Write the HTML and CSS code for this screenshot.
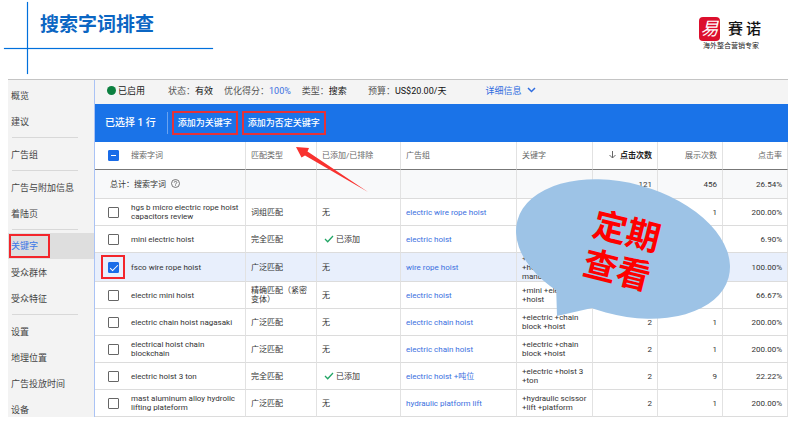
FILE: index.html
```html
<!DOCTYPE html>
<html lang="zh-CN">
<head>
<meta charset="utf-8">
<meta name="viewport" content="width=device-width, initial-scale=1">
<title>搜索字词排查</title>
<link rel="stylesheet" href="styles.css">
</head>
<body>
<header class="slide-head">
  <h1 class="title">搜索字词排查</h1>
  <div class="brand">
    <div class="brand-row">
      <span class="seal">易</span>
      <span class="brand-name"><span>賽</span><span>诺</span></span>
    </div>
    <div class="slogan">海外整合营销专家</div>
  </div>
</header>

<div class="panel">
  <nav class="side">
    <a href="#">概览</a>
    <a href="#">建议</a>
    <hr>
    <a href="#">广告组</a>
    <hr>
    <a href="#">广告与附加信息</a>
    <a href="#">着陆页</a>
    <hr>
    <a href="#" class="active"><span class="mark">关键字</span></a>
    <a href="#">受众群体</a>
    <a href="#">受众特征</a>
    <hr>
    <a href="#">设置</a>
    <a href="#">地理位置</a>
    <a href="#">广告投放时间</a>
    <a href="#">设备</a>
  </nav>

  <main class="main">
    <div class="status">
      <span class="enabled"><i class="dot"></i>已启用</span>
      <span class="pair">状态：<b>有效</b></span>
      <span class="pair">优化得分：<a href="#">100%</a></span>
      <span class="pair">类型：<b>搜索</b></span>
      <span class="pair budget">预算：<b>US$20.00/天</b></span>
      <a href="#" class="details">详细信息
        <svg width="9" height="6" viewBox="0 0 9 6"><path d="M1 1l3.5 3.5L8 1" fill="none" stroke="currentColor" stroke-width="1.5"/></svg>
      </a>
    </div>

    <div class="actions">
      <span class="count">已选择 1 行</span>
      <button type="button">添加为关键字</button>
      <button type="button">添加为否定关键字</button>
      <svg class="arrow" width="74" height="48" viewBox="0 0 74 48"><path d="M1 1L14 2L12.500 5.500L73 46L10 9.500L6.500 11.500Z" fill="#f8322f"/></svg>
    </div>

    <table class="terms">
      <colgroup>
        <col class="c-check"><col class="c-term"><col class="c-match"><col class="c-added"><col class="c-group"><col class="c-key"><col class="c-num"><col class="c-num"><col class="c-num">
      </colgroup>
      <thead>
        <tr>
          <th class="check"><input type="checkbox" class="some" aria-label="全选"></th>
          <th>搜索字词</th>
          <th>匹配类型</th>
          <th>已添加/已排除</th>
          <th>广告组</th>
          <th>关键字</th>
          <th class="num sorted"><svg width="7" height="8" viewBox="0 0 7 8"><path d="M3.500 0v7M.5 4l3 3 3-3" fill="none" stroke="#666" stroke-width="1"/></svg>点击次数</th>
          <th class="num">展示次数</th>
          <th class="num">点击率</th>
        </tr>
      </thead>
      <tbody>
        <tr class="total">
          <td colspan="2" class="sum">总计：搜索字词
            <svg width="9" height="9" viewBox="0 0 9 9" fill="none" stroke="#555" stroke-width=".8"><circle cx="4.500" cy="4.500" r="4"/><path d="M3.200 3.600c0-1.700 2.600-1.700 2.600 0 0 .8-1.300.9-1.300 2M4.500 6.300v.8"/></svg></td>
          <td></td><td></td><td></td><td></td>
          <td class="num">121</td><td class="num">456</td><td class="num">26.54%</td>
        </tr>
        <tr>
          <td class="check"><input type="checkbox" aria-label="hgs b micro electric rope hoist capacitors review"></td>
          <td>hgs b micro electric rope hoist capacitors review</td><td>词组匹配</td><td>无</td>
          <td><a href="#">electric wire rope hoist</a></td><td></td>
          <td class="num"></td><td class="num">1</td><td class="num">200.00%</td>
        </tr>
        <tr>
          <td class="check"><input type="checkbox" aria-label="mini electric hoist"></td>
          <td>mini electric hoist</td><td>完全匹配</td>
          <td><svg class="tick" width="10" height="8" viewBox="0 0 10 8"><path d="M1 4l2.700 2.700L9 1" fill="none" stroke="#22a565" stroke-width="1.300"/></svg>已添加</td>
          <td><a href="#">electric hoist</a></td><td></td>
          <td class="num"></td><td class="num"></td><td class="num">6.90%</td>
        </tr>
        <tr class="selected">
          <td class="check"><span class="ring"><input type="checkbox" checked aria-label="fsco wire rope hoist"></span></td>
          <td>fsco wire rope hoist</td><td>广泛匹配</td><td>无</td>
          <td><a href="#">wire rope hoist</a></td><td>+wire +rope<br>+hoist<br>manufacturer</td>
          <td class="num"></td><td class="num"></td><td class="num">100.00%</td>
        </tr>
        <tr>
          <td class="check"><input type="checkbox" aria-label="electric mini hoist"></td>
          <td>electric mini hoist</td><td>精确匹配（紧密变体）</td><td>无</td>
          <td><a href="#">electric hoist</a></td><td>+mini +electric +hoist</td>
          <td class="num"></td><td class="num"></td><td class="num">66.67%</td>
        </tr>
        <tr>
          <td class="check"><input type="checkbox" aria-label="electric chain hoist nagasaki"></td>
          <td>electric chain hoist nagasaki</td><td>广泛匹配</td><td>无</td>
          <td><a href="#">electric chain hoist</a></td><td>+electric +chain block +hoist</td>
          <td class="num">2</td><td class="num">1</td><td class="num">200.00%</td>
        </tr>
        <tr>
          <td class="check"><input type="checkbox" aria-label="electrical hoist chain blockchain"></td>
          <td>electrical hoist chain blockchain</td><td>广泛匹配</td><td>无</td>
          <td><a href="#">electric chain hoist</a></td><td>+electric +chain block +hoist</td>
          <td class="num">2</td><td class="num">1</td><td class="num">200.00%</td>
        </tr>
        <tr>
          <td class="check"><input type="checkbox" aria-label="electric hoist 3 ton"></td>
          <td>electric hoist 3 ton</td><td>完全匹配</td>
          <td><svg class="tick" width="10" height="8" viewBox="0 0 10 8"><path d="M1 4l2.700 2.700L9 1" fill="none" stroke="#22a565" stroke-width="1.300"/></svg>已添加</td>
          <td><a href="#">electric hoist +吨位</a></td><td>+electric +hoist 3 +ton</td>
          <td class="num">2</td><td class="num">9</td><td class="num">22.22%</td>
        </tr>
        <tr>
          <td class="check"><input type="checkbox" aria-label="mast aluminum alloy hydrolic lifting plateform"></td>
          <td>mast aluminum alloy hydrolic lifting plateform</td><td>广泛匹配</td><td>无</td>
          <td><a href="#">hydraulic platform lift</a></td><td>+hydraulic scissor +lift +platform</td>
          <td class="num">2</td><td class="num">1</td><td class="num">200.00%</td>
        </tr>
      </tbody>
    </table>

    <svg class="callout" width="216" height="142" viewBox="0 0 216 142">
      <ellipse cx="108" cy="71" rx="109.400" ry="65.900" transform="rotate(15.150 108 71)" fill="#9dc3e6"/>
      <path d="M41 105L42 138L77 130L110 90Z" fill="#9dc3e6"/>
      <g transform="rotate(14 107 72)" fill="#f00" font-size="34" font-weight="700" text-anchor="middle">
        <text x="107" y="65">定期</text>
        <text x="107" y="105">查看</text>
      </g>
    </svg>
  </main>
</div>
</body>
</html>
```
FILE: styles.css
```css
* { box-sizing: border-box; }

body {
  margin: 0;
  background: #fff;
  color: #333;
  font-family: Roboto, "Noto Sans CJK SC", sans-serif;
  font-size: 9px;
}

a { color: #3b6fe0; text-decoration: none; }
b { font-weight: 400; color: #111; }

/* Slide heading */
.slide-head {
  position: relative;
  display: flex;
  justify-content: space-between;
  height: 79px;
  padding: 12px 39px 0 40px;
}
.slide-head::before,
.slide-head::after {
  content: "";
  position: absolute;
  background: #0070dc;
  box-shadow: 0 0 1px #0070dc;
}
.slide-head::before { left: 4px; top: 48px; width: 209px; height: 1px; }
.slide-head::after { left: 27px; top: 2px; width: 1px; height: 72px; }
.title {
  margin: 0;
  color: #0b66c3;
  font-size: 19px;
  line-height: 26px;
  font-weight: 700;
}
.brand { padding-top: 5px; }
.brand-row { display: flex; align-items: center; gap: 8px; margin-left: -4px; }
.seal {
  width: 21px;
  height: 24px;
  border-radius: 4px;
  background: #dc0f2d;
  color: #fff;
  font-size: 18px;
  line-height: 23px;
  text-align: center;
  font-style: italic;
}
.brand-name {
  display: flex;
  gap: 3px;
  color: #111;
  font-size: 15px;
  line-height: 20px;
  font-weight: 500;
}
.slogan { color: #222; font-size: 7px; line-height: 10px; }

/* Console panel */
.panel {
  display: flex;
  margin: 0 12px 0 8px;
  border-top: 1px solid #c4c4c4;
  overflow: hidden;
}
.side {
  flex: 0 0 87px;
  margin-bottom: -6px;
  padding-top: 2px;
  background: #f3f3f3;
  border-right: 1px solid #aac3f5;
}
.side a {
  display: flex;
  align-items: center;
  height: 26px;
  padding-left: 3px;
  color: #444;
}
.side hr {
  height: 1px;
  margin: 3px 16px 3px 4px;
  border: 0;
  background: #d8d8d8;
}
.side .active { padding-left: 1px; background: #dedede; color: #3b78e7; }
.mark {
  width: 41px;
  height: 24px;
  border: 2px solid #f3252b;
  line-height: 20px;
}

.main { position: relative; flex: 1; min-width: 0; }
.status {
  display: flex;
  align-items: center;
  height: 24px;
  padding: 0 12px 4px;
  background: #f4f4f4;
  color: #555;
  white-space: nowrap;
}
.enabled { display: flex; align-items: center; gap: 2px; margin-right: 23px; color: #222; }
.dot { width: 9px; height: 9px; border-radius: 50%; background: #0c8040; }
.pair { margin-right: 11px; }
.budget { margin: 0 39px 0 10px; }
.details { display: flex; align-items: center; gap: 6px; color: #2f6de0; }

.actions {
  position: relative;
  display: flex;
  align-items: center;
  gap: 4px;
  height: 38px;
  padding-left: 10px;
  background: #1a73e8;
  color: #fff;
}
.count {
  padding-right: 11px;
  border-right: 1px solid #6aa3f1;
  font-size: 10px;
  line-height: 22px;
  font-weight: 500;
}
.actions button {
  height: 24px;
  padding: 0 4px;
  border: 2px solid #e53238;
  background: none;
  color: #fff;
  font: 500 9px/20px Roboto, "Noto Sans CJK SC", sans-serif;
}
.arrow { position: absolute; left: 200px; top: 42px; z-index: 1; }

/* Search terms table */
.terms {
  width: 100%;
  table-layout: fixed;
  border-collapse: separate;
  border-spacing: 0;
  font-size: 8px;
  line-height: 9px;
}
.c-check { width: 36px; }
.c-term { width: 115px; }
.c-match { width: 71px; }
.c-added { width: 84px; }
.c-group { width: 116px; }
.c-key { width: 76px; }
.c-num { width: 65px; }
.terms th,
.terms td {
  height: 27px;
  padding: 0 5px;
  border-right: 1px solid #e2e2e2;
  border-bottom: 1px solid #dcdcdc;
  text-align: left;
  font-weight: 400;
}
.terms th {
  height: 28px;
  border-bottom: 1px solid #777;
  color: #666;
}
.terms .check { padding: 0; border-right: 0; text-align: center; }
.terms .check + th,
.terms .check + td { padding: 0 5px 0 0; }
.terms .num { text-align: right; }
.terms .sorted { color: #222; font-weight: 700; }
.sorted svg { margin-right: 4px; vertical-align: -1px; }
.terms .total td { height: 29px; background: #f8f9fa; }
.terms .total .sum { padding-left: 15px; }
.sum svg { margin-left: 3px; vertical-align: -1px; }
.terms .selected td { height: 29px; background: #e8effc; }
.tick { margin: 0 2px; vertical-align: -1px; }

input[type="checkbox"] {
  appearance: none;
  display: block;
  position: relative;
  width: 11px;
  height: 11px;
  margin: 0 auto;
  border: 1px solid #666;
  border-radius: 1px;
  background: #fff;
}
input.some,
input:checked { border-color: #1a6ce8; background: #1a6ce8; }
input.some::after,
input:checked::after { content: ""; position: absolute; }
input.some::after { left: 2px; top: 4px; width: 5px; height: 1px; background: #fff; }
input:checked::after {
  left: 3px;
  top: 0;
  width: 3px;
  height: 7px;
  border: solid #fff;
  border-width: 0 1px 1px 0;
  transform: rotate(45deg);
}
.ring {
  display: flex;
  align-items: center;
  width: 24px;
  height: 24px;
  margin: 0 auto;
  border: 2px solid #f3252b;
}

.callout {
  position: absolute;
  left: 420px;
  top: 98px;
  font-family: "Noto Sans CJK SC", sans-serif;
}
```
